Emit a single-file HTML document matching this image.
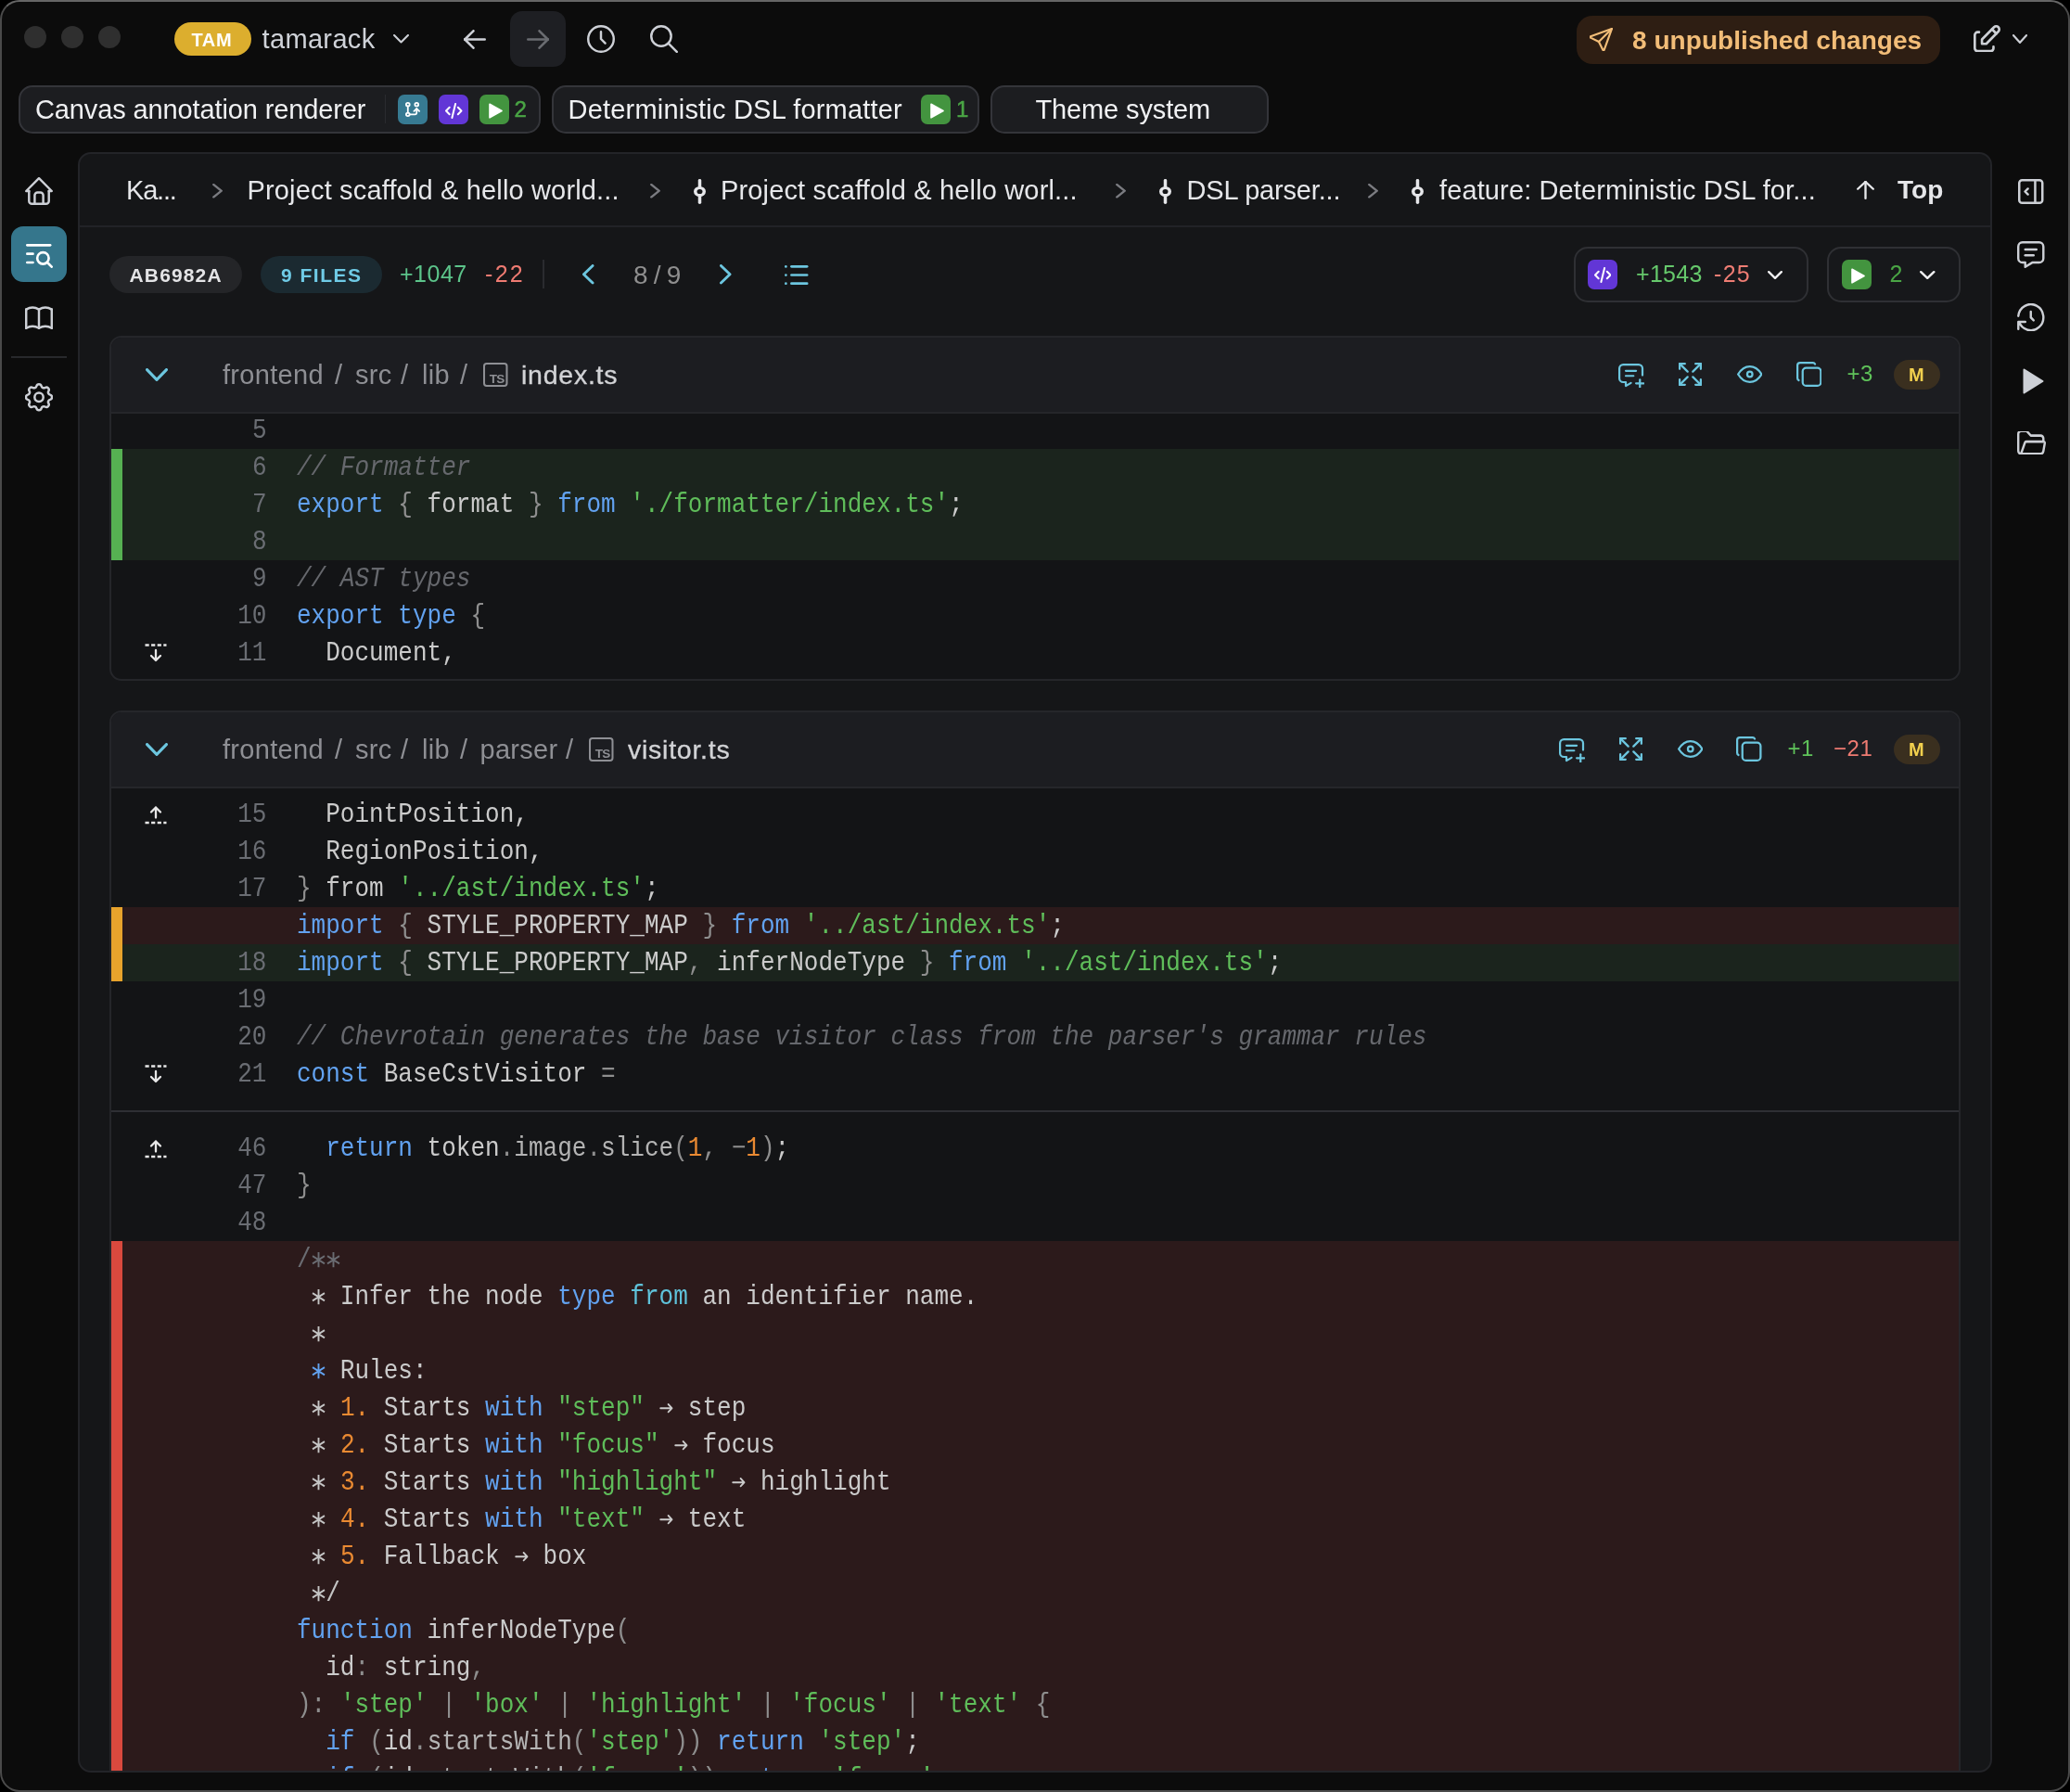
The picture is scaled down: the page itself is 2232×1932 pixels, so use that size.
<!DOCTYPE html><html><head><meta charset="utf-8"><style>html,body{margin:0;padding:0;background:#000;width:2232px;height:1932px;overflow:hidden}</style></head><body>
<div style="position:absolute;left:0;top:0;width:2232px;height:1932px;box-sizing:border-box;border-radius:21px;background:#0c0c0c;border:2px solid #4a4a4a;border-top-color:#666;overflow:hidden">
<div style="position:absolute;left:-2px;top:-2px;width:2232px;height:1932px;will-change:transform">
<div style="position:absolute;left:26px;top:28px;width:24px;height:24px;border-radius:50%;background:#2f2f2f"></div>
<div style="position:absolute;left:66px;top:28px;width:24px;height:24px;border-radius:50%;background:#2f2f2f"></div>
<div style="position:absolute;left:106px;top:28px;width:24px;height:24px;border-radius:50%;background:#2f2f2f"></div>
<div style="position:absolute;left:188px;top:24px;width:83px;height:36px;border-radius:18px;background:#dcae2e"></div>
<div style="position:absolute;left:206.50px;top:32.20px;font:700 20px/22.34px 'Liberation Sans', sans-serif;color:#ffffff;letter-spacing:0.6px;white-space:pre;">TAM</div>
<div style="position:absolute;left:282.50px;top:25.65px;font:400 29px/32.39px 'Liberation Sans', sans-serif;color:#cfd2d8;letter-spacing:0.35px;white-space:pre;">tamarack</div>
<svg style="position:absolute;left:424px;top:37px;" width="17" height="9.5" viewBox="5.15 8.15 13.7 7.7" preserveAspectRatio="none" fill="none" stroke="#cdd0d6" stroke-width="1.7" stroke-linecap="round" stroke-linejoin="round"><path d="M6 9l6 6l6 -6"/></svg>
<svg style="position:absolute;left:500px;top:31.5px;" width="24" height="21.0" viewBox="4.15 5.15 15.7 13.7" preserveAspectRatio="none" fill="none" stroke="#cdd0d6" stroke-width="1.7" stroke-linecap="round" stroke-linejoin="round"><path d="M5 12l14 0"/><path d="M5 12l6 6"/><path d="M5 12l6 -6"/></svg>
<div style="position:absolute;left:550px;top:12px;width:60px;height:60px;border-radius:13px;background:#1e1f23"></div>
<svg style="position:absolute;left:568px;top:31.5px;" width="24" height="21.0" viewBox="4.15 5.15 15.7 13.7" preserveAspectRatio="none" fill="none" stroke="#6a6c71" stroke-width="1.7" stroke-linecap="round" stroke-linejoin="round"><path d="M5 12l14 0"/><path d="M13 18l6 -6"/><path d="M13 6l6 6"/></svg>
<svg style="position:absolute;left:633px;top:27px;" width="30" height="30" viewBox="2.2 2.2 19.6 19.6" preserveAspectRatio="none" fill="none" stroke="#cdd0d6" stroke-width="1.6" stroke-linecap="round" stroke-linejoin="round"><path d="M3 12a9 9 0 1 0 18 0a9 9 0 0 0 -18 0"/><path d="M12 7v5l3 3"/></svg>
<svg style="position:absolute;left:701px;top:27px;" width="30" height="30" viewBox="2.2 2.2 19.6 19.6" preserveAspectRatio="none" fill="none" stroke="#cdd0d6" stroke-width="1.6" stroke-linecap="round" stroke-linejoin="round"><path d="M3 10a7 7 0 1 0 14 0a7 7 0 1 0 -14 0"/><path d="M21 21l-6 -6"/></svg>
<div style="position:absolute;left:1700px;top:17px;width:392px;height:52px;border-radius:17px;background:#2e1e13"></div>
<svg style="position:absolute;left:1713.5px;top:29.5px;" width="25.0" height="25.0" viewBox="2.15 2.15 19.7 19.7" preserveAspectRatio="none" fill="none" stroke="#f2bd78" stroke-width="1.7" stroke-linecap="round" stroke-linejoin="round"><path d="M10 14l11 -11"/><path d="M21 3l-6.5 18a.55 .55 0 0 1 -1 0l-3.5 -7l-7 -3.5a.55 .55 0 0 1 0 -1l18 -6.5"/></svg>
<div style="position:absolute;left:1760.00px;top:28.46px;font:700 28px/31.28px 'Liberation Sans', sans-serif;color:#f2bd78;letter-spacing:0.05px;white-space:pre;">8 unpublished changes</div>
<svg style="position:absolute;left:2128px;top:26.5px;" width="29" height="29.5" viewBox="3.15 2.15 18.7 18.7" preserveAspectRatio="none" fill="none" stroke="#cdd0d6" stroke-width="1.7" stroke-linecap="round" stroke-linejoin="round"><path d="M7 7h-1a2 2 0 0 0 -2 2v9a2 2 0 0 0 2 2h9a2 2 0 0 0 2 -2v-1"/><path d="M20.385 6.585a2.1 2.1 0 0 0 -2.97 -2.97l-8.415 8.385v3h3l8.385 -8.415z"/><path d="M16 5l3 3"/></svg>
<svg style="position:absolute;left:2170px;top:37px;" width="16" height="10" viewBox="5.15 8.15 13.7 7.7" preserveAspectRatio="none" fill="none" stroke="#cdd0d6" stroke-width="1.7" stroke-linecap="round" stroke-linejoin="round"><path d="M6 9l6 6l6 -6"/></svg>
<div style="position:absolute;left:20px;top:92px;width:563px;height:52px;box-sizing:border-box;border-radius:15px;background:#1c1d20;border:2px solid #34353a"></div>
<div style="position:absolute;left:38.00px;top:102.25px;font:400 29px/32.39px 'Liberation Sans', sans-serif;color:#f0f1f3;letter-spacing:-0.12px;white-space:pre;">Canvas annotation renderer</div>
<div style="position:absolute;left:415px;top:102px;width:1px;height:31px;background:#2a2b2f"></div>
<div style="position:absolute;left:429px;top:102px;width:32px;height:32px;border-radius:7px;background:#377a92"></div>
<svg style="position:absolute;left:437px;top:110px;" width="16" height="16" viewBox="4.05 3.05 16.9 17.9" preserveAspectRatio="none" fill="none" stroke="#ffffff" stroke-width="1.9" stroke-linecap="round" stroke-linejoin="round"><path d="M5 18a2 2 0 1 0 4 0a2 2 0 1 0 -4 0"/><path d="M5 6a2 2 0 1 0 4 0a2 2 0 1 0 -4 0"/><path d="M15 6a2 2 0 1 0 4 0a2 2 0 1 0 -4 0"/><path d="M7 8l0 8"/><path d="M9 18h6a2 2 0 0 0 2 -2v-5"/><path d="M14 14l3 -3l3 3"/></svg>
<div style="position:absolute;left:473px;top:102px;width:32px;height:32px;border-radius:7px;background:#6236d6"></div>
<svg style="position:absolute;left:480px;top:110.5px;" width="18.5" height="17.0" viewBox="1.9 2.9 20.2 18.2" preserveAspectRatio="none" fill="none" stroke="#ffffff" stroke-width="2.2" stroke-linecap="round" stroke-linejoin="round"><path d="M7 8l-4 4l4 4"/><path d="M17 8l4 4l-4 4"/><path d="M14 4l-4 16"/></svg>
<div style="position:absolute;left:517px;top:102px;width:32px;height:32px;border-radius:7px;background:#43943f"></div>
<svg style="position:absolute;left:527px;top:110.5px" width="15" height="17" viewBox="0 0 15 17"><path d="M1 1.2 L14 8.5 L1 15.8 Z" fill="#fff" stroke="#fff" stroke-width="1.6" stroke-linejoin="round"/></svg>
<div style="position:absolute;left:554.50px;top:104.78px;font:400 24px/26.81px 'Liberation Sans', sans-serif;color:#4aa545;letter-spacing:0px;white-space:pre;-webkit-text-stroke:0.5px #4aa545">2</div>
<div style="position:absolute;left:595px;top:92px;width:461px;height:52px;box-sizing:border-box;border-radius:15px;background:#1c1d20;border:2px solid #34353a"></div>
<div style="position:absolute;left:612.50px;top:102.25px;font:400 29px/32.39px 'Liberation Sans', sans-serif;color:#f0f1f3;letter-spacing:0.2px;white-space:pre;">Deterministic DSL formatter</div>
<div style="position:absolute;left:993px;top:102px;width:32px;height:32px;border-radius:7px;background:#43943f"></div>
<svg style="position:absolute;left:1003px;top:110.5px" width="15" height="17" viewBox="0 0 15 17"><path d="M1 1.2 L14 8.5 L1 15.8 Z" fill="#fff" stroke="#fff" stroke-width="1.6" stroke-linejoin="round"/></svg>
<div style="position:absolute;left:1031.00px;top:104.78px;font:400 24px/26.81px 'Liberation Sans', sans-serif;color:#4aa545;letter-spacing:0px;white-space:pre;-webkit-text-stroke:0.5px #4aa545">1</div>
<div style="position:absolute;left:1068px;top:92px;width:300px;height:52px;box-sizing:border-box;border-radius:15px;background:#1c1d20;border:2px solid #34353a"></div>
<div style="position:absolute;left:1116.50px;top:102.25px;font:400 29px/32.39px 'Liberation Sans', sans-serif;color:#f0f1f3;letter-spacing:-0.13px;white-space:pre;">Theme system</div>
<svg style="position:absolute;left:27px;top:191px;" width="30" height="30" viewBox="2.2 2.2 19.6 19.6" preserveAspectRatio="none" fill="none" stroke="#cdd0d6" stroke-width="1.6" stroke-linecap="round" stroke-linejoin="round"><path d="M5 12l-2 0l9 -9l9 9l-2 0"/><path d="M5 12v7a2 2 0 0 0 2 2h10a2 2 0 0 0 2 -2v-7"/><path d="M9 21v-6a2 2 0 0 1 2 -2h2a2 2 0 0 1 2 2v6"/></svg>
<div style="position:absolute;left:12px;top:244px;width:60px;height:60px;border-radius:13px;background:#35768c"></div>
<svg style="position:absolute;left:28px;top:263px;" width="29" height="26" viewBox="3.15 5.15 18.7 16.7" preserveAspectRatio="none" fill="none" stroke="#ffffff" stroke-width="1.7" stroke-linecap="round" stroke-linejoin="round"><path d="M11 15a4 4 0 1 0 8 0a4 4 0 1 0 -8 0"/><path d="M18.5 18.5l2.5 2.5"/><path d="M4 6h16"/><path d="M4 12h4"/><path d="M4 18h4"/></svg>
<svg style="position:absolute;left:27px;top:329.5px;" width="30" height="25.0" viewBox="2.2 3.7 19.6 16.1" preserveAspectRatio="none" fill="none" stroke="#cdd0d6" stroke-width="1.6" stroke-linecap="round" stroke-linejoin="round"><path d="M3 19a9 9 0 0 1 9 0a9 9 0 0 1 9 0"/><path d="M3 6a9 9 0 0 1 9 0a9 9 0 0 1 9 0"/><path d="M3 6l0 13"/><path d="M12 6l0 13"/><path d="M21 6l0 13"/></svg>
<div style="position:absolute;left:12px;top:384px;width:60px;height:2px;background:#28292c"></div>
<svg style="position:absolute;left:27px;top:413px;" width="30" height="30.5" viewBox="2.4000000000000004 2.2 19.200000000000003 19.6" preserveAspectRatio="none" fill="none" stroke="#cdd0d6" stroke-width="1.6" stroke-linecap="round" stroke-linejoin="round"><path d="M10.325 4.317c.426 -1.756 2.924 -1.756 3.35 0a1.724 1.724 0 0 0 2.573 1.066c1.543 -.94 3.31 .826 2.37 2.37a1.724 1.724 0 0 0 1.065 2.572c1.756 .426 1.756 2.924 0 3.35a1.724 1.724 0 0 0 -1.066 2.573c.94 1.543 -.826 3.31 -2.37 2.37a1.724 1.724 0 0 0 -2.572 1.065c-.426 1.756 -2.924 1.756 -3.35 0a1.724 1.724 0 0 0 -2.573 -1.066c-1.543 .94 -3.31 -.826 -2.37 -2.37a1.724 1.724 0 0 0 -1.065 -2.572c-1.756 -.426 -1.756 -2.924 0 -3.35a1.724 1.724 0 0 0 1.066 -2.573c-.94 -1.543 .826 -3.31 2.37 -2.37c1 .608 2.296 .07 2.572 -1.065z"/><path d="M9 12a3 3 0 1 0 6 0a3 3 0 0 0 -6 0"/></svg>
<svg style="position:absolute;left:2176px;top:192.5px;" width="27.5" height="27.0" viewBox="3.2 3.2 17.6 17.6" preserveAspectRatio="none" fill="none" stroke="#cdd0d6" stroke-width="1.6" stroke-linecap="round" stroke-linejoin="round"><path d="M4 6a2 2 0 0 1 2 -2h12a2 2 0 0 1 2 2v12a2 2 0 0 1 -2 2h-12a2 2 0 0 1 -2 -2z"/><path d="M15 4v16"/><path d="M10 10l-2 2l2 2"/></svg>
<svg style="position:absolute;left:2175px;top:260px;" width="29.5" height="29" viewBox="2.2 3.2 19.6 18.6" preserveAspectRatio="none" fill="none" stroke="#cdd0d6" stroke-width="1.6" stroke-linecap="round" stroke-linejoin="round"><path d="M8 9h8"/><path d="M8 13h6"/><path d="M18 4a3 3 0 0 1 3 3v8a3 3 0 0 1 -3 3h-5l-5 3v-3h-2a3 3 0 0 1 -3 -3v-8a3 3 0 0 1 3 -3h12z"/></svg>
<svg style="position:absolute;left:2175px;top:326.5px;" width="29.5" height="30.5" viewBox="2.2 2.2 19.6 19.6" preserveAspectRatio="none" fill="none" stroke="#cdd0d6" stroke-width="1.6" stroke-linecap="round" stroke-linejoin="round"><path d="M12 8l0 4l2 2"/><path d="M3.05 11a9 9 0 1 1 .5 4m-.5 5v-5h5"/></svg>
<svg style="position:absolute;left:2181px;top:396.5px" width="23" height="28" viewBox="0 0 23 28"><path d="M1.5 1.5 L21.5 14 L1.5 26.5 Z" fill="#cdd0d6" stroke="#cdd0d6" stroke-width="2" stroke-linejoin="round"/></svg>
<svg style="position:absolute;left:2175px;top:464.5px;" width="31" height="25.5" viewBox="2.2 4.2 20.6 15.6" preserveAspectRatio="none" fill="none" stroke="#cdd0d6" stroke-width="1.6" stroke-linecap="round" stroke-linejoin="round"><path d="M5 19l2.757 -7.351a1 1 0 0 1 .936 -.649h12.307a1 1 0 0 1 .986 1.164l-.996 5.211a2 2 0 0 1 -1.964 1.625h-14.026a2 2 0 0 1 -2 -2v-11a2 2 0 0 1 2 -2h4l3 3h7a2 2 0 0 1 2 2v2"/></svg>
<div style="position:absolute;left:84px;top:164px;width:2064px;height:1747px;box-sizing:border-box;border:2px solid #232428;border-radius:14px;background:#151618;overflow:hidden">
<div style="position:absolute;left:-86px;top:-166px;width:2232px;height:1932px">
<div style="position:absolute;left:84px;top:243px;width:2064px;height:2px;background:#222327"></div>
<div style="position:absolute;left:136.00px;top:188.56px;font:400 29px/32.39px 'Liberation Sans', sans-serif;color:#e6e7ea;letter-spacing:-1.2px;white-space:pre;">Ka...</div>
<svg style="position:absolute;left:228.5px;top:198px;" width="11.0" height="15.5" viewBox="8.05 5.05 7.9 13.9" preserveAspectRatio="none" fill="none" stroke="#7a7b80" stroke-width="1.9" stroke-linecap="round" stroke-linejoin="round"><path d="M9 6l6 6l-6 6"/></svg>
<div style="position:absolute;left:266.50px;top:188.56px;font:400 29px/32.39px 'Liberation Sans', sans-serif;color:#e6e7ea;letter-spacing:0.16px;white-space:pre;">Project scaffold &amp; hello world...</div>
<svg style="position:absolute;left:700.5px;top:198px;" width="11.0" height="15.5" viewBox="8.05 5.05 7.9 13.9" preserveAspectRatio="none" fill="none" stroke="#7a7b80" stroke-width="1.9" stroke-linecap="round" stroke-linejoin="round"><path d="M9 6l6 6l-6 6"/></svg>
<svg style="position:absolute;left:747.5px;top:192.5px;" width="13.0" height="27.0" viewBox="7.9 1.9 8.2 20.2" preserveAspectRatio="none" fill="none" stroke="#e6e7ea" stroke-width="2.2" stroke-linecap="round" stroke-linejoin="round"><path d="M9 12a3 3 0 1 0 6 0a3 3 0 1 0 -6 0"/><path d="M12 3l0 6"/><path d="M12 15l0 6"/></svg>
<div style="position:absolute;left:777.00px;top:188.56px;font:400 29px/32.39px 'Liberation Sans', sans-serif;color:#e6e7ea;letter-spacing:0.15px;white-space:pre;">Project scaffold &amp; hello worl...</div>
<svg style="position:absolute;left:1202.5px;top:198px;" width="11.0" height="15.5" viewBox="8.05 5.05 7.9 13.9" preserveAspectRatio="none" fill="none" stroke="#7a7b80" stroke-width="1.9" stroke-linecap="round" stroke-linejoin="round"><path d="M9 6l6 6l-6 6"/></svg>
<svg style="position:absolute;left:1249.5px;top:192.5px;" width="13.0" height="27.0" viewBox="7.9 1.9 8.2 20.2" preserveAspectRatio="none" fill="none" stroke="#e6e7ea" stroke-width="2.2" stroke-linecap="round" stroke-linejoin="round"><path d="M9 12a3 3 0 1 0 6 0a3 3 0 1 0 -6 0"/><path d="M12 3l0 6"/><path d="M12 15l0 6"/></svg>
<div style="position:absolute;left:1279.50px;top:188.56px;font:400 29px/32.39px 'Liberation Sans', sans-serif;color:#e6e7ea;letter-spacing:-0.18px;white-space:pre;">DSL parser...</div>
<svg style="position:absolute;left:1474.5px;top:198px;" width="11.0" height="15.5" viewBox="8.05 5.05 7.9 13.9" preserveAspectRatio="none" fill="none" stroke="#7a7b80" stroke-width="1.9" stroke-linecap="round" stroke-linejoin="round"><path d="M9 6l6 6l-6 6"/></svg>
<svg style="position:absolute;left:1521.5px;top:192.5px;" width="13.0" height="27.0" viewBox="7.9 1.9 8.2 20.2" preserveAspectRatio="none" fill="none" stroke="#e6e7ea" stroke-width="2.2" stroke-linecap="round" stroke-linejoin="round"><path d="M9 12a3 3 0 1 0 6 0a3 3 0 1 0 -6 0"/><path d="M12 3l0 6"/><path d="M12 15l0 6"/></svg>
<div style="position:absolute;left:1552.00px;top:188.56px;font:400 29px/32.39px 'Liberation Sans', sans-serif;color:#e6e7ea;letter-spacing:0.12px;white-space:pre;">feature: Deterministic DSL for...</div>
<svg style="position:absolute;left:2002px;top:195px;" width="19" height="20" viewBox="5.15 4.15 13.7 15.7" preserveAspectRatio="none" fill="none" stroke="#e6e7ea" stroke-width="1.7" stroke-linecap="round" stroke-linejoin="round"><path d="M12 5l0 14"/><path d="M18 11l-6 -6"/><path d="M6 11l6 -6"/></svg>
<div style="position:absolute;left:2046.00px;top:189.46px;font:700 28px/31.28px 'Liberation Sans', sans-serif;color:#e6e7ea;letter-spacing:0px;white-space:pre;">Top</div>
<div style="position:absolute;left:118px;top:276px;width:143px;height:40px;border-radius:20px;background:#242528"></div>
<div style="position:absolute;left:139.50px;top:285.00px;font:700 21px/23.46px 'Liberation Sans', sans-serif;color:#e4e4e6;letter-spacing:1.15px;white-space:pre;">AB6982A</div>
<div style="position:absolute;left:281px;top:276px;width:131px;height:40px;border-radius:20px;background:#1b2a31"></div>
<div style="position:absolute;left:303.00px;top:285.00px;font:700 21px/23.46px 'Liberation Sans', sans-serif;color:#6fcbe6;letter-spacing:1.5px;white-space:pre;">9 FILES</div>
<div style="position:absolute;left:431.00px;top:281.88px;font:400 25px/27.93px 'Liberation Sans', sans-serif;color:#5cc48a;letter-spacing:0.5px;white-space:pre;">+1047</div>
<div style="position:absolute;left:523.00px;top:281.88px;font:400 25px/27.93px 'Liberation Sans', sans-serif;color:#ef7b72;letter-spacing:2.3px;white-space:pre;">-22</div>
<div style="position:absolute;left:585px;top:280px;width:2px;height:31px;background:#2a2b2f"></div>
<svg style="position:absolute;left:628px;top:285px;" width="12.5" height="21.5" viewBox="8.1 5.1 7.8 13.8" preserveAspectRatio="none" fill="none" stroke="#6cc6df" stroke-width="1.8" stroke-linecap="round" stroke-linejoin="round"><path d="M15 6l-6 6l6 6"/></svg>
<div style="position:absolute;left:683.00px;top:281.46px;font:400 28px/31.28px 'Liberation Sans', sans-serif;color:#8f8f8f;letter-spacing:6.2px;white-space:pre;">8/9</div>
<svg style="position:absolute;left:776px;top:285px;" width="12.5" height="21.5" viewBox="8.1 5.1 7.8 13.8" preserveAspectRatio="none" fill="none" stroke="#6cc6df" stroke-width="1.8" stroke-linecap="round" stroke-linejoin="round"><path d="M9 6l6 6l-6 6"/></svg>
<svg style="position:absolute;left:846px;top:285.5px;" width="25.5" height="21.0" viewBox="4.1 5.1 16.8 13.8" preserveAspectRatio="none" fill="none" stroke="#6cc6df" stroke-width="1.8" stroke-linecap="round" stroke-linejoin="round"><path d="M9 6l11 0"/><path d="M9 12l11 0"/><path d="M9 18l11 0"/><path d="M5 6l0 .01"/><path d="M5 12l0 .01"/><path d="M5 18l0 .01"/></svg>
<div style="position:absolute;left:1697px;top:266px;width:253px;height:60px;box-sizing:border-box;border-radius:15px;border:2px solid #2f3034;background:#17181b"></div>
<div style="position:absolute;left:1711.5px;top:280px;width:32.0px;height:32px;border-radius:7px;background:#6236d6"></div>
<svg style="position:absolute;left:1718.5px;top:287.5px;" width="18.5" height="17.0" viewBox="1.9 2.9 20.2 18.2" preserveAspectRatio="none" fill="none" stroke="#ffffff" stroke-width="2.2" stroke-linecap="round" stroke-linejoin="round"><path d="M7 8l-4 4l4 4"/><path d="M17 8l4 4l-4 4"/><path d="M14 4l-4 16"/></svg>
<div style="position:absolute;left:1764.00px;top:281.88px;font:400 25px/27.93px 'Liberation Sans', sans-serif;color:#66c96c;letter-spacing:0.3px;white-space:pre;">+1543</div>
<div style="position:absolute;left:1848.00px;top:281.88px;font:400 25px/27.93px 'Liberation Sans', sans-serif;color:#ef7d74;letter-spacing:1.3px;white-space:pre;">-25</div>
<svg style="position:absolute;left:1906px;top:292px;" width="16" height="9" viewBox="4.95 7.95 14.1 8.1" preserveAspectRatio="none" fill="none" stroke="#f0f0f2" stroke-width="2.1" stroke-linecap="round" stroke-linejoin="round"><path d="M6 9l6 6l6 -6"/></svg>
<div style="position:absolute;left:1970px;top:266px;width:144px;height:60px;box-sizing:border-box;border-radius:15px;border:2px solid #2f3034;background:#17181b"></div>
<div style="position:absolute;left:1986px;top:280px;width:32px;height:32px;border-radius:7px;background:#43943f"></div>
<svg style="position:absolute;left:1996px;top:288.5px" width="15" height="17" viewBox="0 0 15 17"><path d="M1 1.2 L14 8.5 L1 15.8 Z" fill="#fff" stroke="#fff" stroke-width="1.6" stroke-linejoin="round"/></svg>
<div style="position:absolute;left:2037.50px;top:281.88px;font:400 25px/27.93px 'Liberation Sans', sans-serif;color:#4aa545;letter-spacing:0px;white-space:pre;">2</div>
<svg style="position:absolute;left:2070px;top:292px;" width="16.5" height="9" viewBox="4.95 7.95 14.1 8.1" preserveAspectRatio="none" fill="none" stroke="#f0f0f2" stroke-width="2.1" stroke-linecap="round" stroke-linejoin="round"><path d="M6 9l6 6l6 -6"/></svg>
<div style="position:absolute;left:118px;top:362px;width:1996px;height:372px;box-sizing:border-box;border:2px solid #25262a;border-radius:13px;background:#131416;overflow:hidden"></div>
<div style="position:absolute;left:120px;top:364px;width:1992px;height:80px;background:#1c1d21;border-radius:11px 11px 0 0"></div>
<div style="position:absolute;left:120px;top:444px;width:1992px;height:2px;background:#25262a"></div>
<svg style="position:absolute;left:156.5px;top:396.5px;" width="24.0" height="14.0" viewBox="5.1 8.1 13.8 7.8" preserveAspectRatio="none" fill="none" stroke="#6cc6df" stroke-width="1.8" stroke-linecap="round" stroke-linejoin="round"><path d="M6 9l6 6l6 -6"/></svg>
<div style="position:absolute;left:240.00px;top:388.25px;font:400 29px/32.39px 'Liberation Sans', sans-serif;color:#8e8f94;letter-spacing:0.3px;white-space:pre;">frontend</div>
<div style="position:absolute;left:361.00px;top:388.25px;font:400 29px/32.39px 'Liberation Sans', sans-serif;color:#8e8f94;letter-spacing:0.3px;white-space:pre;">/</div>
<div style="position:absolute;left:383.00px;top:388.25px;font:400 29px/32.39px 'Liberation Sans', sans-serif;color:#8e8f94;letter-spacing:0.3px;white-space:pre;">src</div>
<div style="position:absolute;left:432.00px;top:388.25px;font:400 29px/32.39px 'Liberation Sans', sans-serif;color:#8e8f94;letter-spacing:0.3px;white-space:pre;">/</div>
<div style="position:absolute;left:455.00px;top:388.25px;font:400 29px/32.39px 'Liberation Sans', sans-serif;color:#8e8f94;letter-spacing:0.3px;white-space:pre;">lib</div>
<div style="position:absolute;left:496.00px;top:388.25px;font:400 29px/32.39px 'Liberation Sans', sans-serif;color:#8e8f94;letter-spacing:0.3px;white-space:pre;">/</div>
<svg style="position:absolute;left:521px;top:390.5px;" width="26.5" height="26.0" viewBox="2.25 2.25 19.5 19.5" preserveAspectRatio="none" fill="none" stroke="#8e8f94" stroke-width="1.5" stroke-linecap="round" stroke-linejoin="round"><path d="M21 19v-14a2 2 0 0 0 -2 -2h-14a2 2 0 0 0 -2 2v14a2 2 0 0 0 2 2h14a2 2 0 0 0 2 -2z"/></svg>
<div style="position:absolute;left:527.80px;top:401.08px;font:700 13.5px/15.08px 'Liberation Sans', sans-serif;color:#8e8f94;letter-spacing:-0.8px;white-space:pre;">TS</div>
<div style="position:absolute;left:562.00px;top:389.21px;font:400 28.5px/31.83px 'Liberation Sans', sans-serif;color:#d2d3d6;letter-spacing:0.75px;white-space:pre;-webkit-text-stroke:0.35px #d2d3d6">index.ts</div>
<svg style="position:absolute;left:1744.5px;top:391.5px;" width="28.5" height="26.5" viewBox="2.2 3.2 20.6 19.6" preserveAspectRatio="none" fill="none" stroke="#6cc6df" stroke-width="1.6" stroke-linecap="round" stroke-linejoin="round"><path d="M8 9h8"/><path d="M8 13h6"/><path d="M12.01 18.594l-4.01 2.406v-3h-2a3 3 0 0 1 -3 -3v-8a3 3 0 0 1 3 -3h12a3 3 0 0 1 3 3v5.5"/><path d="M16 19h6"/><path d="M19 16v6"/></svg>
<svg style="position:absolute;left:1809.5px;top:391.0px;" width="25.0" height="25.0" viewBox="3.2 3.2 17.6 17.6" preserveAspectRatio="none" fill="none" stroke="#6cc6df" stroke-width="1.6" stroke-linecap="round" stroke-linejoin="round"><path d="M16 4l4 0l0 4"/><path d="M14 10l6 -6"/><path d="M8 20l-4 0l0 -4"/><path d="M4 20l6 -6"/><path d="M16 20l4 0l0 -4"/><path d="M14 14l6 6"/><path d="M8 4l-4 0l0 4"/><path d="M4 4l6 6"/></svg>
<svg style="position:absolute;left:1872.5px;top:394.0px;" width="27.5" height="19.0" viewBox="2.2 5.2 19.6 13.6" preserveAspectRatio="none" fill="none" stroke="#6cc6df" stroke-width="1.6" stroke-linecap="round" stroke-linejoin="round"><path d="M10 12a2 2 0 1 0 4 0a2 2 0 0 0 -4 0"/><path d="M21 12c-2.4 4 -5.4 6 -9 6c-3.6 0 -6.6 -2 -9 -6c2.4 -4 5.4 -6 9 -6c3.6 0 6.6 2 9 6"/></svg>
<svg style="position:absolute;left:1936.5px;top:390.0px;" width="27.5" height="27.0" viewBox="2.2 2.2 19.6 19.6" preserveAspectRatio="none" fill="none" stroke="#6cc6df" stroke-width="1.6" stroke-linecap="round" stroke-linejoin="round"><path d="M7 9.667a2.667 2.667 0 0 1 2.667 -2.667h8.666a2.667 2.667 0 0 1 2.667 2.667v8.666a2.667 2.667 0 0 1 -2.667 2.667h-8.666a2.667 2.667 0 0 1 -2.667 -2.667z"/><path d="M4.012 16.737a2.005 2.005 0 0 1 -1.012 -1.737v-10c0 -1.1 .9 -2 2 -2h10c.75 0 1.158 .385 1.5 1"/></svg>
<div style="position:absolute;left:1991.50px;top:390.28px;font:400 24px/26.81px 'Liberation Sans', sans-serif;color:#5fc35a;letter-spacing:0.6px;white-space:pre;">+3</div>
<div style="position:absolute;left:2042px;top:387.5px;width:50px;height:32.0px;border-radius:16px;background:#3a2f1f"></div>
<div style="position:absolute;left:2058.00px;top:392.90px;font:700 20px/22.34px 'Liberation Sans', sans-serif;color:#f2d04e;letter-spacing:0px;white-space:pre;">M</div>
<div style="position:absolute;left:207.5px;top:445px;width:80px;text-align:right;font:26.04px/40px 'Liberation Mono', monospace;color:#6a6d73;white-space:pre;transform:scaleY(1.1);transform-origin:0 28px">5</div>
<div style="position:absolute;left:120px;top:484px;width:1992px;height:40px;background:#1b241d"></div>
<div style="position:absolute;left:120px;top:484px;width:12px;height:40px;background:#56b152"></div>
<div style="position:absolute;left:207.5px;top:485px;width:80px;text-align:right;font:26.04px/40px 'Liberation Mono', monospace;color:#6a6d73;white-space:pre;transform:scaleY(1.1);transform-origin:0 28px">6</div>
<div style="position:absolute;left:320px;top:485px;font:26.04px/40px 'Liberation Mono', monospace;white-space:pre;transform:scaleY(1.1);transform-origin:0 28px"><span style="color:#66686d;font-style:italic">// Formatter</span></div>
<div style="position:absolute;left:120px;top:524px;width:1992px;height:40px;background:#1b241d"></div>
<div style="position:absolute;left:120px;top:524px;width:12px;height:40px;background:#56b152"></div>
<div style="position:absolute;left:207.5px;top:525px;width:80px;text-align:right;font:26.04px/40px 'Liberation Mono', monospace;color:#6a6d73;white-space:pre;transform:scaleY(1.1);transform-origin:0 28px">7</div>
<div style="position:absolute;left:320px;top:525px;font:26.04px/40px 'Liberation Mono', monospace;white-space:pre;transform:scaleY(1.1);transform-origin:0 28px"><span style="color:#62a2f0">export</span><span style="color:#cbcbcb"> </span><span style="color:#8e8e8e">{</span><span style="color:#cbcbcb"> format </span><span style="color:#8e8e8e">}</span><span style="color:#cbcbcb"> </span><span style="color:#62a2f0">from</span><span style="color:#cbcbcb"> </span><span style="color:#5fbd5a">&#x27;./formatter/index.ts&#x27;</span><span style="color:#cbcbcb">;</span></div>
<div style="position:absolute;left:120px;top:564px;width:1992px;height:40px;background:#1b241d"></div>
<div style="position:absolute;left:120px;top:564px;width:12px;height:40px;background:#56b152"></div>
<div style="position:absolute;left:207.5px;top:565px;width:80px;text-align:right;font:26.04px/40px 'Liberation Mono', monospace;color:#6a6d73;white-space:pre;transform:scaleY(1.1);transform-origin:0 28px">8</div>
<div style="position:absolute;left:207.5px;top:605px;width:80px;text-align:right;font:26.04px/40px 'Liberation Mono', monospace;color:#6a6d73;white-space:pre;transform:scaleY(1.1);transform-origin:0 28px">9</div>
<div style="position:absolute;left:320px;top:605px;font:26.04px/40px 'Liberation Mono', monospace;white-space:pre;transform:scaleY(1.1);transform-origin:0 28px"><span style="color:#66686d;font-style:italic">// AST types</span></div>
<div style="position:absolute;left:207.5px;top:645px;width:80px;text-align:right;font:26.04px/40px 'Liberation Mono', monospace;color:#6a6d73;white-space:pre;transform:scaleY(1.1);transform-origin:0 28px">10</div>
<div style="position:absolute;left:320px;top:645px;font:26.04px/40px 'Liberation Mono', monospace;white-space:pre;transform:scaleY(1.1);transform-origin:0 28px"><span style="color:#62a2f0">export</span><span style="color:#cbcbcb"> </span><span style="color:#62a2f0">type</span><span style="color:#cbcbcb"> </span><span style="color:#8e8e8e">{</span></div>
<div style="position:absolute;left:207.5px;top:685px;width:80px;text-align:right;font:26.04px/40px 'Liberation Mono', monospace;color:#6a6d73;white-space:pre;transform:scaleY(1.1);transform-origin:0 28px">11</div>
<div style="position:absolute;left:320px;top:685px;font:26.04px/40px 'Liberation Mono', monospace;white-space:pre;transform:scaleY(1.1);transform-origin:0 28px"><span style="color:#cbcbcb">  Document,</span></div>
<svg style="position:absolute;left:155px;top:693px" width="26" height="22" viewBox="0 0 26 22"><path d="M1.5 2.5h23" fill="none" stroke="#e8e8e8" stroke-width="2.4" stroke-dasharray="4.2 2.4"/><path d="M13 8v11M8 14l5 5 5-5" fill="none" stroke="#e8e8e8" stroke-width="2.3" stroke-linecap="round" stroke-linejoin="round"/></svg>
<div style="position:absolute;left:118px;top:766px;width:1996px;height:1194px;box-sizing:border-box;border:2px solid #25262a;border-radius:13px;background:#131416"></div>
<div style="position:absolute;left:120px;top:768px;width:1992px;height:80px;background:#1c1d21;border-radius:11px 11px 0 0"></div>
<div style="position:absolute;left:120px;top:848px;width:1992px;height:2px;background:#25262a"></div>
<svg style="position:absolute;left:156.5px;top:800.5px;" width="24.0" height="14.0" viewBox="5.1 8.1 13.8 7.8" preserveAspectRatio="none" fill="none" stroke="#6cc6df" stroke-width="1.8" stroke-linecap="round" stroke-linejoin="round"><path d="M6 9l6 6l6 -6"/></svg>
<div style="position:absolute;left:240.00px;top:792.25px;font:400 29px/32.39px 'Liberation Sans', sans-serif;color:#8e8f94;letter-spacing:0.3px;white-space:pre;">frontend</div>
<div style="position:absolute;left:361.00px;top:792.25px;font:400 29px/32.39px 'Liberation Sans', sans-serif;color:#8e8f94;letter-spacing:0.3px;white-space:pre;">/</div>
<div style="position:absolute;left:383.00px;top:792.25px;font:400 29px/32.39px 'Liberation Sans', sans-serif;color:#8e8f94;letter-spacing:0.3px;white-space:pre;">src</div>
<div style="position:absolute;left:432.00px;top:792.25px;font:400 29px/32.39px 'Liberation Sans', sans-serif;color:#8e8f94;letter-spacing:0.3px;white-space:pre;">/</div>
<div style="position:absolute;left:455.00px;top:792.25px;font:400 29px/32.39px 'Liberation Sans', sans-serif;color:#8e8f94;letter-spacing:0.3px;white-space:pre;">lib</div>
<div style="position:absolute;left:496.00px;top:792.25px;font:400 29px/32.39px 'Liberation Sans', sans-serif;color:#8e8f94;letter-spacing:0.3px;white-space:pre;">/</div>
<div style="position:absolute;left:517.50px;top:792.25px;font:400 29px/32.39px 'Liberation Sans', sans-serif;color:#8e8f94;letter-spacing:0.3px;white-space:pre;">parser</div>
<div style="position:absolute;left:610.00px;top:792.25px;font:400 29px/32.39px 'Liberation Sans', sans-serif;color:#8e8f94;letter-spacing:0.3px;white-space:pre;">/</div>
<svg style="position:absolute;left:635px;top:794.5px;" width="26.5" height="26.0" viewBox="2.25 2.25 19.5 19.5" preserveAspectRatio="none" fill="none" stroke="#8e8f94" stroke-width="1.5" stroke-linecap="round" stroke-linejoin="round"><path d="M21 19v-14a2 2 0 0 0 -2 -2h-14a2 2 0 0 0 -2 2v14a2 2 0 0 0 2 2h14a2 2 0 0 0 2 -2z"/></svg>
<div style="position:absolute;left:641.80px;top:805.08px;font:700 13.5px/15.08px 'Liberation Sans', sans-serif;color:#8e8f94;letter-spacing:-0.8px;white-space:pre;">TS</div>
<div style="position:absolute;left:677.00px;top:793.21px;font:400 28.5px/31.83px 'Liberation Sans', sans-serif;color:#d2d3d6;letter-spacing:0.75px;white-space:pre;-webkit-text-stroke:0.35px #d2d3d6">visitor.ts</div>
<svg style="position:absolute;left:1680.5px;top:795.5px;" width="28.5" height="26.5" viewBox="2.2 3.2 20.6 19.6" preserveAspectRatio="none" fill="none" stroke="#6cc6df" stroke-width="1.6" stroke-linecap="round" stroke-linejoin="round"><path d="M8 9h8"/><path d="M8 13h6"/><path d="M12.01 18.594l-4.01 2.406v-3h-2a3 3 0 0 1 -3 -3v-8a3 3 0 0 1 3 -3h12a3 3 0 0 1 3 3v5.5"/><path d="M16 19h6"/><path d="M19 16v6"/></svg>
<svg style="position:absolute;left:1746px;top:795.0px;" width="25" height="25.0" viewBox="3.2 3.2 17.6 17.6" preserveAspectRatio="none" fill="none" stroke="#6cc6df" stroke-width="1.6" stroke-linecap="round" stroke-linejoin="round"><path d="M16 4l4 0l0 4"/><path d="M14 10l6 -6"/><path d="M8 20l-4 0l0 -4"/><path d="M4 20l6 -6"/><path d="M16 20l4 0l0 -4"/><path d="M14 14l6 6"/><path d="M8 4l-4 0l0 4"/><path d="M4 4l6 6"/></svg>
<svg style="position:absolute;left:1808.5px;top:798.0px;" width="27.5" height="19.0" viewBox="2.2 5.2 19.6 13.6" preserveAspectRatio="none" fill="none" stroke="#6cc6df" stroke-width="1.6" stroke-linecap="round" stroke-linejoin="round"><path d="M10 12a2 2 0 1 0 4 0a2 2 0 0 0 -4 0"/><path d="M21 12c-2.4 4 -5.4 6 -9 6c-3.6 0 -6.6 -2 -9 -6c2.4 -4 5.4 -6 9 -6c3.6 0 6.6 2 9 6"/></svg>
<svg style="position:absolute;left:1872px;top:794.0px;" width="27.5" height="27.0" viewBox="2.2 2.2 19.6 19.6" preserveAspectRatio="none" fill="none" stroke="#6cc6df" stroke-width="1.6" stroke-linecap="round" stroke-linejoin="round"><path d="M7 9.667a2.667 2.667 0 0 1 2.667 -2.667h8.666a2.667 2.667 0 0 1 2.667 2.667v8.666a2.667 2.667 0 0 1 -2.667 2.667h-8.666a2.667 2.667 0 0 1 -2.667 -2.667z"/><path d="M4.012 16.737a2.005 2.005 0 0 1 -1.012 -1.737v-10c0 -1.1 .9 -2 2 -2h10c.75 0 1.158 .385 1.5 1"/></svg>
<div style="position:absolute;left:1927.50px;top:794.28px;font:400 24px/26.81px 'Liberation Sans', sans-serif;color:#5fc35a;letter-spacing:0.6px;white-space:pre;">+1</div>
<div style="position:absolute;left:1977.00px;top:794.28px;font:400 24px/26.81px 'Liberation Sans', sans-serif;color:#ef7b72;letter-spacing:0.6px;white-space:pre;">−21</div>
<div style="position:absolute;left:2042px;top:791.5px;width:50px;height:32.0px;border-radius:16px;background:#3a2f1f"></div>
<div style="position:absolute;left:2058.00px;top:796.90px;font:700 20px/22.34px 'Liberation Sans', sans-serif;color:#f2d04e;letter-spacing:0px;white-space:pre;">M</div>
<div style="position:absolute;left:207.5px;top:859px;width:80px;text-align:right;font:26.04px/40px 'Liberation Mono', monospace;color:#6a6d73;white-space:pre;transform:scaleY(1.1);transform-origin:0 28px">15</div>
<div style="position:absolute;left:320px;top:859px;font:26.04px/40px 'Liberation Mono', monospace;white-space:pre;transform:scaleY(1.1);transform-origin:0 28px"><span style="color:#cbcbcb">  PointPosition,</span></div>
<svg style="position:absolute;left:155px;top:868px" width="26" height="22" viewBox="0 0 26 22"><path d="M13 2.5v11M8 7.5l5-5 5 5" fill="none" stroke="#e8e8e8" stroke-width="2.3" stroke-linecap="round" stroke-linejoin="round"/><path d="M1.5 19h23" fill="none" stroke="#e8e8e8" stroke-width="2.4" stroke-dasharray="4.2 2.4"/></svg>
<div style="position:absolute;left:207.5px;top:899px;width:80px;text-align:right;font:26.04px/40px 'Liberation Mono', monospace;color:#6a6d73;white-space:pre;transform:scaleY(1.1);transform-origin:0 28px">16</div>
<div style="position:absolute;left:320px;top:899px;font:26.04px/40px 'Liberation Mono', monospace;white-space:pre;transform:scaleY(1.1);transform-origin:0 28px"><span style="color:#cbcbcb">  RegionPosition,</span></div>
<div style="position:absolute;left:207.5px;top:939px;width:80px;text-align:right;font:26.04px/40px 'Liberation Mono', monospace;color:#6a6d73;white-space:pre;transform:scaleY(1.1);transform-origin:0 28px">17</div>
<div style="position:absolute;left:320px;top:939px;font:26.04px/40px 'Liberation Mono', monospace;white-space:pre;transform:scaleY(1.1);transform-origin:0 28px"><span style="color:#8e8e8e">}</span><span style="color:#cbcbcb"> from </span><span style="color:#5fbd5a">&#x27;../ast/index.ts&#x27;</span><span style="color:#cbcbcb">;</span></div>
<div style="position:absolute;left:120px;top:978px;width:1992px;height:40px;background:#2c1a1b"></div>
<div style="position:absolute;left:120px;top:978px;width:12px;height:40px;background:#e8a32c"></div>
<div style="position:absolute;left:320px;top:979px;font:26.04px/40px 'Liberation Mono', monospace;white-space:pre;transform:scaleY(1.1);transform-origin:0 28px"><span style="color:#62a2f0">import</span><span style="color:#cbcbcb"> </span><span style="color:#8e8e8e">{</span><span style="color:#cbcbcb"> STYLE_PROPERTY_MAP </span><span style="color:#8e8e8e">}</span><span style="color:#cbcbcb"> </span><span style="color:#62a2f0">from</span><span style="color:#cbcbcb"> </span><span style="color:#5fbd5a">&#x27;../ast/index.ts&#x27;</span><span style="color:#cbcbcb">;</span></div>
<div style="position:absolute;left:120px;top:1018px;width:1992px;height:40px;background:#1b241d"></div>
<div style="position:absolute;left:120px;top:1018px;width:12px;height:40px;background:#e8a32c"></div>
<div style="position:absolute;left:207.5px;top:1019px;width:80px;text-align:right;font:26.04px/40px 'Liberation Mono', monospace;color:#6a6d73;white-space:pre;transform:scaleY(1.1);transform-origin:0 28px">18</div>
<div style="position:absolute;left:320px;top:1019px;font:26.04px/40px 'Liberation Mono', monospace;white-space:pre;transform:scaleY(1.1);transform-origin:0 28px"><span style="color:#62a2f0">import</span><span style="color:#cbcbcb"> </span><span style="color:#8e8e8e">{</span><span style="color:#cbcbcb"> STYLE_PROPERTY_MAP</span><span style="color:#8e8e8e">,</span><span style="color:#cbcbcb"> inferNodeType </span><span style="color:#8e8e8e">}</span><span style="color:#cbcbcb"> </span><span style="color:#62a2f0">from</span><span style="color:#cbcbcb"> </span><span style="color:#5fbd5a">&#x27;../ast/index.ts&#x27;</span><span style="color:#cbcbcb">;</span></div>
<div style="position:absolute;left:207.5px;top:1059px;width:80px;text-align:right;font:26.04px/40px 'Liberation Mono', monospace;color:#6a6d73;white-space:pre;transform:scaleY(1.1);transform-origin:0 28px">19</div>
<div style="position:absolute;left:207.5px;top:1099px;width:80px;text-align:right;font:26.04px/40px 'Liberation Mono', monospace;color:#6a6d73;white-space:pre;transform:scaleY(1.1);transform-origin:0 28px">20</div>
<div style="position:absolute;left:320px;top:1099px;font:26.04px/40px 'Liberation Mono', monospace;white-space:pre;transform:scaleY(1.1);transform-origin:0 28px"><span style="color:#66686d;font-style:italic">// Chevrotain generates the base visitor class from the parser&#x27;s grammar rules</span></div>
<div style="position:absolute;left:207.5px;top:1139px;width:80px;text-align:right;font:26.04px/40px 'Liberation Mono', monospace;color:#6a6d73;white-space:pre;transform:scaleY(1.1);transform-origin:0 28px">21</div>
<div style="position:absolute;left:320px;top:1139px;font:26.04px/40px 'Liberation Mono', monospace;white-space:pre;transform:scaleY(1.1);transform-origin:0 28px"><span style="color:#62a2f0">const</span><span style="color:#cbcbcb"> BaseCstVisitor </span><span style="color:#8e8e8e">=</span></div>
<svg style="position:absolute;left:155px;top:1147px" width="26" height="22" viewBox="0 0 26 22"><path d="M1.5 2.5h23" fill="none" stroke="#e8e8e8" stroke-width="2.4" stroke-dasharray="4.2 2.4"/><path d="M13 8v11M8 14l5 5 5-5" fill="none" stroke="#e8e8e8" stroke-width="2.3" stroke-linecap="round" stroke-linejoin="round"/></svg>
<div style="position:absolute;left:207.5px;top:1219px;width:80px;text-align:right;font:26.04px/40px 'Liberation Mono', monospace;color:#6a6d73;white-space:pre;transform:scaleY(1.1);transform-origin:0 28px">46</div>
<div style="position:absolute;left:320px;top:1219px;font:26.04px/40px 'Liberation Mono', monospace;white-space:pre;transform:scaleY(1.1);transform-origin:0 28px"><span style="color:#cbcbcb">  </span><span style="color:#62a2f0">return</span><span style="color:#cbcbcb"> token</span><span style="color:#8e8e8e">.</span><span style="color:#b4b4b4">image</span><span style="color:#8e8e8e">.</span><span style="color:#b4b4b4">slice</span><span style="color:#8e8e8e">(</span><span style="color:#ea8a32">1</span><span style="color:#8e8e8e">,</span><span style="color:#cbcbcb"> </span><span style="color:#8e8e8e">−</span><span style="color:#ea8a32">1</span><span style="color:#8e8e8e">)</span><span style="color:#cbcbcb">;</span></div>
<svg style="position:absolute;left:155px;top:1228px" width="26" height="22" viewBox="0 0 26 22"><path d="M13 2.5v11M8 7.5l5-5 5 5" fill="none" stroke="#e8e8e8" stroke-width="2.3" stroke-linecap="round" stroke-linejoin="round"/><path d="M1.5 19h23" fill="none" stroke="#e8e8e8" stroke-width="2.4" stroke-dasharray="4.2 2.4"/></svg>
<div style="position:absolute;left:207.5px;top:1259px;width:80px;text-align:right;font:26.04px/40px 'Liberation Mono', monospace;color:#6a6d73;white-space:pre;transform:scaleY(1.1);transform-origin:0 28px">47</div>
<div style="position:absolute;left:320px;top:1259px;font:26.04px/40px 'Liberation Mono', monospace;white-space:pre;transform:scaleY(1.1);transform-origin:0 28px"><span style="color:#8e8e8e">}</span></div>
<div style="position:absolute;left:207.5px;top:1299px;width:80px;text-align:right;font:26.04px/40px 'Liberation Mono', monospace;color:#6a6d73;white-space:pre;transform:scaleY(1.1);transform-origin:0 28px">48</div>
<div style="position:absolute;left:120px;top:1338px;width:1992px;height:40px;background:#2c1a1b"></div>
<div style="position:absolute;left:120px;top:1338px;width:12px;height:40px;background:#d9493e"></div>
<div style="position:absolute;left:320px;top:1339px;font:26.04px/40px 'Liberation Mono', monospace;white-space:pre;transform:scaleY(1.1);transform-origin:0 28px"><span style="color:#6a6c72">/</span><span style="position:relative;color:transparent">*<svg style="position:absolute;left:0.6px;top:7.3px" width="15" height="16" viewBox="0 0 15 16" fill="none" stroke="#6a6c72" stroke-width="1.9"><path d="M7.5 0.6v14.8M1 4.25l13 7.5M1 11.75l13-7.5"/></svg></span><span style="position:relative;color:transparent">*<svg style="position:absolute;left:0.6px;top:7.3px" width="15" height="16" viewBox="0 0 15 16" fill="none" stroke="#6a6c72" stroke-width="1.9"><path d="M7.5 0.6v14.8M1 4.25l13 7.5M1 11.75l13-7.5"/></svg></span></div>
<div style="position:absolute;left:120px;top:1378px;width:1992px;height:40px;background:#2c1a1b"></div>
<div style="position:absolute;left:120px;top:1378px;width:12px;height:40px;background:#d9493e"></div>
<div style="position:absolute;left:320px;top:1379px;font:26.04px/40px 'Liberation Mono', monospace;white-space:pre;transform:scaleY(1.1);transform-origin:0 28px"><span style="color:#cbcbcb"> </span><span style="position:relative;color:transparent">*<svg style="position:absolute;left:0.6px;top:7.3px" width="15" height="16" viewBox="0 0 15 16" fill="none" stroke="#c4c4c4" stroke-width="1.9"><path d="M7.5 0.6v14.8M1 4.25l13 7.5M1 11.75l13-7.5"/></svg></span><span style="color:#cbcbcb"> Infer the node </span><span style="color:#62a2f0">type</span><span style="color:#cbcbcb"> </span><span style="color:#5fc2da">from</span><span style="color:#cbcbcb"> an identifier name.</span></div>
<div style="position:absolute;left:120px;top:1418px;width:1992px;height:40px;background:#2c1a1b"></div>
<div style="position:absolute;left:120px;top:1418px;width:12px;height:40px;background:#d9493e"></div>
<div style="position:absolute;left:320px;top:1419px;font:26.04px/40px 'Liberation Mono', monospace;white-space:pre;transform:scaleY(1.1);transform-origin:0 28px"><span style="color:#cbcbcb"> </span><span style="position:relative;color:transparent">*<svg style="position:absolute;left:0.6px;top:7.3px" width="15" height="16" viewBox="0 0 15 16" fill="none" stroke="#c4c4c4" stroke-width="1.9"><path d="M7.5 0.6v14.8M1 4.25l13 7.5M1 11.75l13-7.5"/></svg></span></div>
<div style="position:absolute;left:120px;top:1458px;width:1992px;height:40px;background:#2c1a1b"></div>
<div style="position:absolute;left:120px;top:1458px;width:12px;height:40px;background:#d9493e"></div>
<div style="position:absolute;left:320px;top:1459px;font:26.04px/40px 'Liberation Mono', monospace;white-space:pre;transform:scaleY(1.1);transform-origin:0 28px"><span style="color:#cbcbcb"> </span><span style="position:relative;color:transparent">*<svg style="position:absolute;left:0.6px;top:7.3px" width="15" height="16" viewBox="0 0 15 16" fill="none" stroke="#62a2f0" stroke-width="1.9"><path d="M7.5 0.6v14.8M1 4.25l13 7.5M1 11.75l13-7.5"/></svg></span><span style="color:#cbcbcb"> Rules:</span></div>
<div style="position:absolute;left:120px;top:1498px;width:1992px;height:40px;background:#2c1a1b"></div>
<div style="position:absolute;left:120px;top:1498px;width:12px;height:40px;background:#d9493e"></div>
<div style="position:absolute;left:320px;top:1499px;font:26.04px/40px 'Liberation Mono', monospace;white-space:pre;transform:scaleY(1.1);transform-origin:0 28px"><span style="color:#cbcbcb"> </span><span style="position:relative;color:transparent">*<svg style="position:absolute;left:0.6px;top:7.3px" width="15" height="16" viewBox="0 0 15 16" fill="none" stroke="#c4c4c4" stroke-width="1.9"><path d="M7.5 0.6v14.8M1 4.25l13 7.5M1 11.75l13-7.5"/></svg></span><span style="color:#cbcbcb"> </span><span style="color:#ea8a32">1.</span><span style="color:#cbcbcb"> Starts </span><span style="color:#62a2f0">with</span><span style="color:#cbcbcb"> </span><span style="color:#5fbd5a">&quot;step&quot;</span><span style="color:#cbcbcb"> </span><span style="position:relative;color:transparent">*<svg style="position:absolute;left:0.5px;top:9.5px" width="15" height="10" viewBox="0 0 15 10" fill="none" stroke="#cbcbcb" stroke-width="1.8" stroke-linecap="round" stroke-linejoin="round"><path d="M1.2 5h12.3M9.6 1.2l3.9 3.8-3.9 3.8"/></svg></span><span style="color:#cbcbcb"> step</span></div>
<div style="position:absolute;left:120px;top:1538px;width:1992px;height:40px;background:#2c1a1b"></div>
<div style="position:absolute;left:120px;top:1538px;width:12px;height:40px;background:#d9493e"></div>
<div style="position:absolute;left:320px;top:1539px;font:26.04px/40px 'Liberation Mono', monospace;white-space:pre;transform:scaleY(1.1);transform-origin:0 28px"><span style="color:#cbcbcb"> </span><span style="position:relative;color:transparent">*<svg style="position:absolute;left:0.6px;top:7.3px" width="15" height="16" viewBox="0 0 15 16" fill="none" stroke="#c4c4c4" stroke-width="1.9"><path d="M7.5 0.6v14.8M1 4.25l13 7.5M1 11.75l13-7.5"/></svg></span><span style="color:#cbcbcb"> </span><span style="color:#ea8a32">2.</span><span style="color:#cbcbcb"> Starts </span><span style="color:#62a2f0">with</span><span style="color:#cbcbcb"> </span><span style="color:#5fbd5a">&quot;focus&quot;</span><span style="color:#cbcbcb"> </span><span style="position:relative;color:transparent">*<svg style="position:absolute;left:0.5px;top:9.5px" width="15" height="10" viewBox="0 0 15 10" fill="none" stroke="#cbcbcb" stroke-width="1.8" stroke-linecap="round" stroke-linejoin="round"><path d="M1.2 5h12.3M9.6 1.2l3.9 3.8-3.9 3.8"/></svg></span><span style="color:#cbcbcb"> focus</span></div>
<div style="position:absolute;left:120px;top:1578px;width:1992px;height:40px;background:#2c1a1b"></div>
<div style="position:absolute;left:120px;top:1578px;width:12px;height:40px;background:#d9493e"></div>
<div style="position:absolute;left:320px;top:1579px;font:26.04px/40px 'Liberation Mono', monospace;white-space:pre;transform:scaleY(1.1);transform-origin:0 28px"><span style="color:#cbcbcb"> </span><span style="position:relative;color:transparent">*<svg style="position:absolute;left:0.6px;top:7.3px" width="15" height="16" viewBox="0 0 15 16" fill="none" stroke="#c4c4c4" stroke-width="1.9"><path d="M7.5 0.6v14.8M1 4.25l13 7.5M1 11.75l13-7.5"/></svg></span><span style="color:#cbcbcb"> </span><span style="color:#ea8a32">3.</span><span style="color:#cbcbcb"> Starts </span><span style="color:#62a2f0">with</span><span style="color:#cbcbcb"> </span><span style="color:#5fbd5a">&quot;highlight&quot;</span><span style="color:#cbcbcb"> </span><span style="position:relative;color:transparent">*<svg style="position:absolute;left:0.5px;top:9.5px" width="15" height="10" viewBox="0 0 15 10" fill="none" stroke="#cbcbcb" stroke-width="1.8" stroke-linecap="round" stroke-linejoin="round"><path d="M1.2 5h12.3M9.6 1.2l3.9 3.8-3.9 3.8"/></svg></span><span style="color:#cbcbcb"> highlight</span></div>
<div style="position:absolute;left:120px;top:1618px;width:1992px;height:40px;background:#2c1a1b"></div>
<div style="position:absolute;left:120px;top:1618px;width:12px;height:40px;background:#d9493e"></div>
<div style="position:absolute;left:320px;top:1619px;font:26.04px/40px 'Liberation Mono', monospace;white-space:pre;transform:scaleY(1.1);transform-origin:0 28px"><span style="color:#cbcbcb"> </span><span style="position:relative;color:transparent">*<svg style="position:absolute;left:0.6px;top:7.3px" width="15" height="16" viewBox="0 0 15 16" fill="none" stroke="#c4c4c4" stroke-width="1.9"><path d="M7.5 0.6v14.8M1 4.25l13 7.5M1 11.75l13-7.5"/></svg></span><span style="color:#cbcbcb"> </span><span style="color:#ea8a32">4.</span><span style="color:#cbcbcb"> Starts </span><span style="color:#62a2f0">with</span><span style="color:#cbcbcb"> </span><span style="color:#5fbd5a">&quot;text&quot;</span><span style="color:#cbcbcb"> </span><span style="position:relative;color:transparent">*<svg style="position:absolute;left:0.5px;top:9.5px" width="15" height="10" viewBox="0 0 15 10" fill="none" stroke="#cbcbcb" stroke-width="1.8" stroke-linecap="round" stroke-linejoin="round"><path d="M1.2 5h12.3M9.6 1.2l3.9 3.8-3.9 3.8"/></svg></span><span style="color:#cbcbcb"> text</span></div>
<div style="position:absolute;left:120px;top:1658px;width:1992px;height:40px;background:#2c1a1b"></div>
<div style="position:absolute;left:120px;top:1658px;width:12px;height:40px;background:#d9493e"></div>
<div style="position:absolute;left:320px;top:1659px;font:26.04px/40px 'Liberation Mono', monospace;white-space:pre;transform:scaleY(1.1);transform-origin:0 28px"><span style="color:#cbcbcb"> </span><span style="position:relative;color:transparent">*<svg style="position:absolute;left:0.6px;top:7.3px" width="15" height="16" viewBox="0 0 15 16" fill="none" stroke="#c4c4c4" stroke-width="1.9"><path d="M7.5 0.6v14.8M1 4.25l13 7.5M1 11.75l13-7.5"/></svg></span><span style="color:#cbcbcb"> </span><span style="color:#ea8a32">5.</span><span style="color:#cbcbcb"> Fallback </span><span style="position:relative;color:transparent">*<svg style="position:absolute;left:0.5px;top:9.5px" width="15" height="10" viewBox="0 0 15 10" fill="none" stroke="#cbcbcb" stroke-width="1.8" stroke-linecap="round" stroke-linejoin="round"><path d="M1.2 5h12.3M9.6 1.2l3.9 3.8-3.9 3.8"/></svg></span><span style="color:#cbcbcb"> box</span></div>
<div style="position:absolute;left:120px;top:1698px;width:1992px;height:40px;background:#2c1a1b"></div>
<div style="position:absolute;left:120px;top:1698px;width:12px;height:40px;background:#d9493e"></div>
<div style="position:absolute;left:320px;top:1699px;font:26.04px/40px 'Liberation Mono', monospace;white-space:pre;transform:scaleY(1.1);transform-origin:0 28px"><span style="color:#cbcbcb"> </span><span style="position:relative;color:transparent">*<svg style="position:absolute;left:0.6px;top:7.3px" width="15" height="16" viewBox="0 0 15 16" fill="none" stroke="#c4c4c4" stroke-width="1.9"><path d="M7.5 0.6v14.8M1 4.25l13 7.5M1 11.75l13-7.5"/></svg></span><span style="color:#c4c4c4">/</span></div>
<div style="position:absolute;left:120px;top:1738px;width:1992px;height:40px;background:#2c1a1b"></div>
<div style="position:absolute;left:120px;top:1738px;width:12px;height:40px;background:#d9493e"></div>
<div style="position:absolute;left:320px;top:1739px;font:26.04px/40px 'Liberation Mono', monospace;white-space:pre;transform:scaleY(1.1);transform-origin:0 28px"><span style="color:#62a2f0">function</span><span style="color:#cbcbcb"> inferNodeType</span><span style="color:#8e8e8e">(</span></div>
<div style="position:absolute;left:120px;top:1778px;width:1992px;height:40px;background:#2c1a1b"></div>
<div style="position:absolute;left:120px;top:1778px;width:12px;height:40px;background:#d9493e"></div>
<div style="position:absolute;left:320px;top:1779px;font:26.04px/40px 'Liberation Mono', monospace;white-space:pre;transform:scaleY(1.1);transform-origin:0 28px"><span style="color:#cbcbcb">  id</span><span style="color:#8e8e8e">:</span><span style="color:#cbcbcb"> string</span><span style="color:#8e8e8e">,</span></div>
<div style="position:absolute;left:120px;top:1818px;width:1992px;height:40px;background:#2c1a1b"></div>
<div style="position:absolute;left:120px;top:1818px;width:12px;height:40px;background:#d9493e"></div>
<div style="position:absolute;left:320px;top:1819px;font:26.04px/40px 'Liberation Mono', monospace;white-space:pre;transform:scaleY(1.1);transform-origin:0 28px"><span style="color:#8e8e8e">):</span><span style="color:#cbcbcb"> </span><span style="color:#5fbd5a">&#x27;step&#x27;</span><span style="color:#cbcbcb"> </span><span style="color:#8e8e8e">|</span><span style="color:#cbcbcb"> </span><span style="color:#5fbd5a">&#x27;box&#x27;</span><span style="color:#cbcbcb"> </span><span style="color:#8e8e8e">|</span><span style="color:#cbcbcb"> </span><span style="color:#5fbd5a">&#x27;highlight&#x27;</span><span style="color:#cbcbcb"> </span><span style="color:#8e8e8e">|</span><span style="color:#cbcbcb"> </span><span style="color:#5fbd5a">&#x27;focus&#x27;</span><span style="color:#cbcbcb"> </span><span style="color:#8e8e8e">|</span><span style="color:#cbcbcb"> </span><span style="color:#5fbd5a">&#x27;text&#x27;</span><span style="color:#cbcbcb"> </span><span style="color:#8e8e8e">{</span></div>
<div style="position:absolute;left:120px;top:1858px;width:1992px;height:40px;background:#2c1a1b"></div>
<div style="position:absolute;left:120px;top:1858px;width:12px;height:40px;background:#d9493e"></div>
<div style="position:absolute;left:320px;top:1859px;font:26.04px/40px 'Liberation Mono', monospace;white-space:pre;transform:scaleY(1.1);transform-origin:0 28px"><span style="color:#cbcbcb">  </span><span style="color:#62a2f0">if</span><span style="color:#cbcbcb"> </span><span style="color:#8e8e8e">(</span><span style="color:#cbcbcb">id</span><span style="color:#8e8e8e">.</span><span style="color:#b4b4b4">startsWith</span><span style="color:#8e8e8e">(</span><span style="color:#5fbd5a">&#x27;step&#x27;</span><span style="color:#8e8e8e">))</span><span style="color:#cbcbcb"> </span><span style="color:#62a2f0">return</span><span style="color:#cbcbcb"> </span><span style="color:#5fbd5a">&#x27;step&#x27;</span><span style="color:#cbcbcb">;</span></div>
<div style="position:absolute;left:120px;top:1898px;width:1992px;height:40px;background:#2c1a1b"></div>
<div style="position:absolute;left:120px;top:1898px;width:12px;height:40px;background:#d9493e"></div>
<div style="position:absolute;left:320px;top:1899px;font:26.04px/40px 'Liberation Mono', monospace;white-space:pre;transform:scaleY(1.1);transform-origin:0 28px"><span style="color:#cbcbcb">  </span><span style="color:#62a2f0">if</span><span style="color:#cbcbcb"> </span><span style="color:#8e8e8e">(</span><span style="color:#cbcbcb">id</span><span style="color:#8e8e8e">.</span><span style="color:#b4b4b4">startsWith</span><span style="color:#8e8e8e">(</span><span style="color:#5fbd5a">&#x27;focus&#x27;</span><span style="color:#8e8e8e">))</span><span style="color:#cbcbcb"> </span><span style="color:#62a2f0">return</span><span style="color:#cbcbcb"> </span><span style="color:#5fbd5a">&#x27;focus&#x27;</span><span style="color:#cbcbcb">;</span></div>
<div style="position:absolute;left:120px;top:1197px;width:1992px;height:2px;background:#2e2f34"></div>
</div></div>
</div></div>
</body></html>
